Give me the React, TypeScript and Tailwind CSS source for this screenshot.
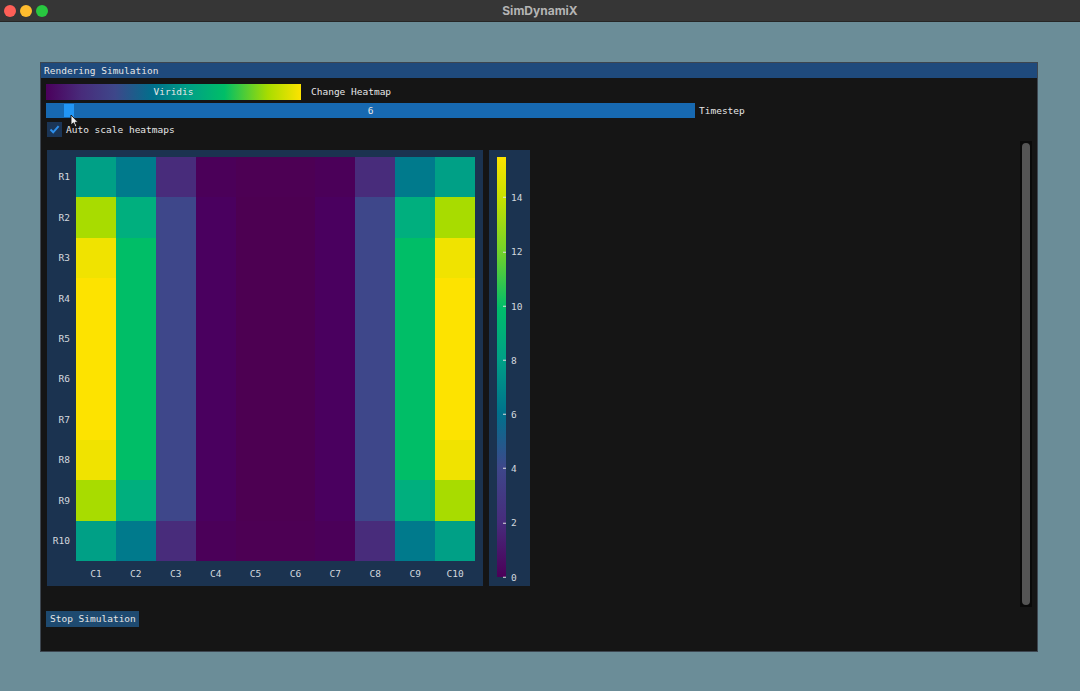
import React from 'react'

// viridis-ish cell colours, picked off the screenshot
const CELL: Record<string, string> = {
  t: 'bg-[#00a086]',
  b: 'bg-[#007a8c]',
  p: 'bg-[#482c7b]',
  q: 'bg-[#4b0059]',
  r: 'bg-[#4d0054]',
  l: 'bg-[#a8dc00]',
  g: 'bg-[#00af7e]',
  h: 'bg-[#00be67]',
  u: 'bg-[#3e478a]',
  m: 'bg-[#4a005f]',
  n: 'bg-[#4d0052]',
  y: 'bg-[#f0e300]',
  z: 'bg-[#fde300]',
}

const ROWS = [
  'tbpqrrqpbt',
  'lgumnnmugl',
  'yhumnnmuhy',
  'zhumnnmuhz',
  'zhumnnmuhz',
  'zhumnnmuhz',
  'zhumnnmuhz',
  'yhumnnmuhy',
  'lgumnnmugl',
  'tbpqrrqpbt',
]

const COLS = ['C1', 'C2', 'C3', 'C4', 'C5', 'C6', 'C7', 'C8', 'C9', 'C10']
const ROW_LABELS = ['R1', 'R2', 'R3', 'R4', 'R5', 'R6', 'R7', 'R8', 'R9', 'R10']

const SCALE_MAX = 15.5
const BAR_H = 420
const TICKS = [0, 2, 4, 6, 8, 10, 12, 14]

function TitleBar() {
  return (
    <div className="h-[22px] shrink-0 bg-[#363636] border-b border-[#262626] grid grid-cols-[1fr_auto_1fr] items-center">
      <div className="flex gap-[4px] pl-[4px]">
        <span className="w-[12px] h-[12px] rounded-full bg-[#fe5f57]" />
        <span className="w-[12px] h-[12px] rounded-full bg-[#febc2e]" />
        <span className="w-[12px] h-[12px] rounded-full bg-[#28c840]" />
      </div>
      <div className="text-[12px] font-bold text-[#b4b4b4] [font-family:Inter,'Noto_Sans',sans-serif]">SimDynamiX</div>
      <div />
    </div>
  )
}

function Heatmap() {
  return (
    <div className="w-[436px] h-[436px] bg-[#1b3350] pt-[7px] flex flex-col">
      <div className="flex">
        <div className="w-[29px] h-[404px] grid grid-rows-10 pr-[6px]">
          {ROW_LABELS.map((r) => (
            <div key={r} className="flex items-center justify-end text-[9.5px] text-[#d3d8de]">
              {r}
            </div>
          ))}
        </div>
        <div className="w-[399px] h-[404px] grid grid-rows-10">
          {ROWS.map((row, i) => (
            <div key={i} className="grid grid-cols-10">
              {row.split('').map((c, j) => (
                <div key={j} className={CELL[c]} />
              ))}
            </div>
          ))}
        </div>
      </div>
      <div className="flex pl-[29px] h-[25px]">
        <div className="w-[399px] grid grid-cols-10">
          {COLS.map((c) => (
            <div key={c} className="flex items-center justify-center text-[9.5px] text-[#d3d8de]">
              {c}
            </div>
          ))}
        </div>
      </div>
    </div>
  )
}

function ColorBar() {
  return (
    <div className="w-[41px] h-[436px] bg-[#1b3350] pl-[8px] pt-[7px]">
      <div className="relative w-[9px] h-[420px] bg-[linear-gradient(to_top,#4b0058_0%,#472c7c_13%,#3e478a_26%,#00718c_39%,#00a086_52%,#00bd6a_64%,#6fd12c_77%,#c5e000_90%,#fde300_100%)]">
        {TICKS.map((v) => (
          <div
            key={v}
            className="absolute left-0 flex items-center translate-y-1/2"
            style={{ bottom: (v / SCALE_MAX) * BAR_H }}
          >
            <span className="ml-[6px] w-[3px] h-[1px] bg-[#e0e0e0]" />
            <span className="ml-[5px] text-[9.5px] text-[#d3d8de] leading-none">{v}</span>
          </div>
        ))}
      </div>
    </div>
  )
}

export default function App() {
  return (
    <div className="relative w-[1080px] h-[691px] overflow-hidden bg-[#6b8d98] flex flex-col [font-family:'DejaVu_Sans_Mono','Liberation_Mono',monospace]">
      <TitleBar />

      <div className="pl-[40px] pt-[40px]">
        <div className="w-[998px] h-[590px] border border-[#3d4650] bg-[#151515] flex flex-col">
          <div className="h-[15px] bg-[#1f4a7c] pl-[3px] flex items-center text-[9.5px] text-[#e6e6e6] leading-none">
            Rendering Simulation
          </div>

          <div className="flex-1 flex flex-col px-[5px] pt-[6px] text-[9.5px] text-[#e6e6e6] leading-none">
            {/* colormap picker */}
            <div className="h-[16px] flex items-center gap-[10px]">
              <div className="w-[255px] h-full flex items-center justify-center bg-[linear-gradient(to_right,#4b005c_0%,#482c7b_14%,#3e478a_27%,#00708c_42%,#00a086_56%,#00be67_70%,#a8dc00_87%,#fde300_100%)]">
                Viridis
              </div>
              <span>Change Heatmap</span>
            </div>

            {/* timestep slider */}
            <div className="mt-[3px] h-[15px] flex items-center gap-[4px]">
              <div className="relative w-[649px] h-full bg-[#1769b1] flex items-center justify-center">
                <div className="absolute left-[18px] top-[1px] w-[10px] h-[13px] bg-[#2196f5]" />
                <span className="relative">6</span>
              </div>
              <span>Timestep</span>
            </div>

            {/* checkbox */}
            <div className="mt-[4px] h-[15px] flex items-center gap-[4px] pl-[1px]">
              <div className="w-[15px] h-[15px] bg-[#1b3556] flex items-center justify-center">
                <svg width="11" height="11" viewBox="0 0 11 11">
                  <path d="M1.5 5.5 L4.2 8.3 L9.6 2.2" fill="none" stroke="#2e8fea" strokeWidth="2" />
                </svg>
              </div>
              <span>Auto scale heatmaps</span>
            </div>

            {/* plots + scrollbar */}
            <div className="mt-[4px] h-[466px] flex">
              <div className="flex-1 pt-[9px] pl-[1px] flex items-start gap-[6px]">
                <Heatmap />
                <ColorBar />
              </div>
              <div className="w-[12px] bg-[#0a0a0a] p-[2px] flex">
                <div className="flex-1 rounded-full bg-[#555555]" />
              </div>
            </div>

            <div className="mt-[4px] w-[93px] h-[16px] bg-[#1e4a70] pl-[4px] flex items-center">
              Stop Simulation
            </div>
          </div>
        </div>
      </div>

      {/* mouse pointer over the slider */}
      <svg className="absolute left-[70px] top-[114px]" width="9" height="14" viewBox="0 0 9 14">
        <path d="M1 1 L1 11 L3.5 8.8 L5.3 12.8 L6.8 12.1 L5.1 8.3 L8 8.3 Z" fill="#f2f2f2" stroke="#111" strokeWidth="0.9" />
      </svg>
    </div>
  )
}
